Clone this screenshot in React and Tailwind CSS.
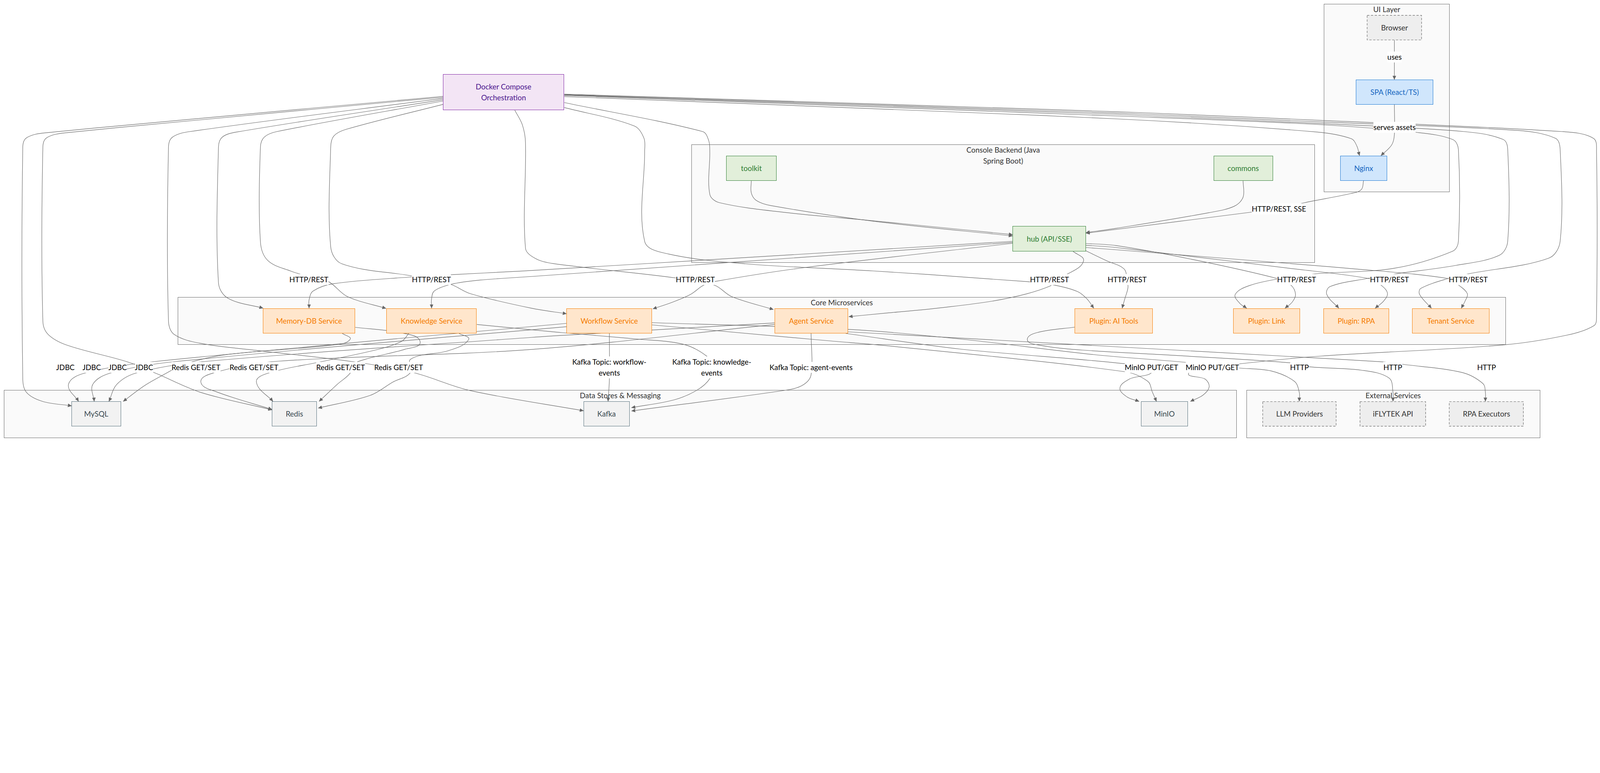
import React from "react";

const FONT = "[font-family:Lato,'Noto_Sans',sans-serif]";
const K = 4098 / 7172;

const V = {
  docker: "bg-[#f3e5f5] border border-solid border-[#7b1fa2] text-[#4a148c]",
  ui: "bg-[#d0e6fc] border border-solid border-[#1976d2] text-[#1565c0]",
  ext: "bg-[#eeeeee] text-[#333333]",
  green: "bg-[#e2efda] border border-solid border-[#2e7d32] text-[#2e7d32]",
  core: "bg-[#ffe6cc] border border-solid border-[#f57c00] text-[#f57c00]",
  data: "bg-[#f2f2f2] border border-solid border-[#546e7a] text-[#37474f]",
};

const groups = [
  { b: [5932, 17, 6494, 861], t: ["UI Layer"] },
  { b: [3098, 647, 5891, 1177], t: ["Console Backend (Java", "Spring Boot)"] },
  { b: [796, 1331, 6747, 1546], t: ["Core Microservices"] },
  { b: [17, 1748, 5541, 1963], t: ["Data Stores & Messaging"] },
  { b: [5584, 1748, 6900, 1963], t: ["External Services"] },
];

const nodes = [
  { b: [1984, 332, 2528, 494], t: ["Docker Compose", "Orchestration"], v: "docker" },
  { b: [6125, 68, 6371, 180], t: ["Browser"], v: "ext" },
  { b: [6075, 357, 6422, 469], t: ["SPA (React/TS)"], v: "ui" },
  { b: [6005, 698, 6214, 810], t: ["Nginx"], v: "ui" },
  { b: [3254, 698, 3479, 811], t: ["toolkit"], v: "green" },
  { b: [5437, 698, 5703, 811], t: ["commons"], v: "green" },
  { b: [4537, 1014, 4866, 1127], t: ["hub (API/SSE)"], v: "green" },
  { b: [1178, 1382, 1591, 1495], t: ["Memory-DB Service"], v: "core" },
  { b: [1731, 1382, 2136, 1495], t: ["Knowledge Service"], v: "core" },
  { b: [2538, 1382, 2921, 1495], t: ["Workflow Service"], v: "core" },
  { b: [3470, 1382, 3800, 1495], t: ["Agent Service"], v: "core" },
  { b: [4815, 1382, 5165, 1495], t: ["Plugin: AI Tools"], v: "core" },
  { b: [5525, 1382, 5825, 1495], t: ["Plugin: Link"], v: "core" },
  { b: [5929, 1382, 6224, 1495], t: ["Plugin: RPA"], v: "core" },
  { b: [6327, 1382, 6673, 1495], t: ["Tenant Service"], v: "core" },
  { b: [320, 1800, 542, 1912], t: ["MySQL"], v: "data" },
  { b: [1218, 1800, 1420, 1912], t: ["Redis"], v: "data" },
  { b: [2614, 1800, 2821, 1912], t: ["Kafka"], v: "data" },
  { b: [5112, 1800, 5322, 1912], t: ["MinIO"], v: "data" },
  { b: [5657, 1800, 5988, 1912], t: ["LLM Providers"], v: "ext" },
  { b: [6093, 1800, 6389, 1912], t: ["iFLYTEK API"], v: "ext" },
  { b: [6493, 1800, 6827, 1912], t: ["RPA Executors"], v: "ext" },
];

const labels = [
  [6248, 255, ["uses"]],
  [6248, 570, ["serves assets"]],
  [5730, 936, ["HTTP/REST, SSE"]],
  [1384, 1253, ["HTTP/REST"]],
  [1933, 1253, ["HTTP/REST"]],
  [3115, 1253, ["HTTP/REST"]],
  [4702, 1253, ["HTTP/REST"]],
  [5050, 1253, ["HTTP/REST"]],
  [5809, 1253, ["HTTP/REST"]],
  [6225, 1253, ["HTTP/REST"]],
  [6578, 1253, ["HTTP/REST"]],
  [293, 1647, ["JDBC"]],
  [411, 1647, ["JDBC"]],
  [527, 1647, ["JDBC"]],
  [645, 1647, ["JDBC"]],
  [878, 1647, ["Redis GET/SET"]],
  [1138, 1647, ["Redis GET/SET"]],
  [1526, 1647, ["Redis GET/SET"]],
  [1786, 1647, ["Redis GET/SET"]],
  [2730, 1646, ["Kafka Topic: workflow-", "events"]],
  [3189, 1646, ["Kafka Topic: knowledge-", "events"]],
  [3634, 1647, ["Kafka Topic: agent-events"]],
  [5159, 1647, ["MinIO PUT/GET"]],
  [5432, 1647, ["MinIO PUT/GET"]],
  [5822, 1647, ["HTTP"]],
  [6240, 1647, ["HTTP"]],
  [6660, 1647, ["HTTP"]],
];

const edges = [
  // UI layer
  [[6248, 180], [6248, 357]],
  [[6248, 469], [6248, 605], [6236, 650], [6188, 698]],
  [[6110, 810], [6100, 850], [6053, 868], [5845, 909], [5730, 936], [5609, 951], [4866, 1046]],
  // console
  [[5570, 811], [5570, 884], [5530, 925], [5416, 954], [5000, 1024], [4866, 1043]],
  [[3366, 811], [3366, 865], [3390, 900], [3454, 922], [3913, 992], [4537, 1058]],
  [[2528, 460], [3148, 590], [3175, 630], [3180, 680], [3180, 871], [3224, 909], [3530, 954], [3913, 990], [4537, 1052]],
  // docker left
  [[1984, 432], [200, 596], [118, 618], [101, 660], [101, 1700], [118, 1760], [190, 1800], [320, 1820]],
  [[1984, 436], [290, 596], [208, 618], [191, 660], [191, 1440], [215, 1500], [300, 1548], [568, 1622], [700, 1675], [900, 1760], [1218, 1838]],
  [[1984, 441], [850, 590], [772, 615], [754, 660], [754, 1440], [780, 1500], [900, 1540], [1173, 1574], [1582, 1622], [1856, 1672], [2100, 1750], [2614, 1842]],
  [[1984, 447], [1060, 592], [995, 615], [978, 660], [978, 1268], [1020, 1337], [1178, 1382]],
  [[1984, 453], [1240, 590], [1183, 615], [1166, 660], [1166, 1084], [1199, 1168], [1300, 1215], [1384, 1240], [1470, 1262], [1556, 1330], [1729, 1383]],
  [[1984, 468], [1550, 580], [1495, 610], [1481, 660], [1481, 1107], [1531, 1183], [1849, 1238], [2018, 1275], [2107, 1317], [2380, 1382], [2538, 1407]],
  // docker bottom
  [[2306, 494], [2340, 560], [2354, 640], [2354, 1113], [2400, 1160], [2478, 1182], [3033, 1247], [3201, 1279], [3278, 1330], [3465, 1388]],
  [[2528, 482], [2842, 565], [2885, 620], [2888, 680], [2888, 1082], [2995, 1139], [3339, 1183], [3913, 1215], [4602, 1263], [4727, 1279], [4827, 1307], [4870, 1340], [4901, 1382]],
  // docker right bundle
  [[2528, 433], [5000, 533], [5900, 592], [6055, 622], [6080, 655], [6092, 698]],
  [[2528, 428], [5000, 520], [5900, 558], [6350, 594], [6510, 626], [6535, 670], [6535, 1082], [6510, 1126], [6247, 1203], [5893, 1228], [5731, 1250], [5600, 1280], [5535, 1320], [5555, 1360], [5586, 1382]],
  [[2528, 426], [5000, 513], [5900, 553], [6560, 590], [6735, 625], [6756, 670], [6756, 1082], [6718, 1145], [6524, 1190], [6254, 1228], [6120, 1250], [5960, 1285], [5945, 1320], [5999, 1382]],
  [[2528, 424], [5000, 507], [5900, 546], [6800, 585], [6970, 620], [6991, 670], [6991, 1082], [6939, 1158], [6579, 1228], [6495, 1247], [6367, 1293], [6361, 1320], [6414, 1382]],
  [[2528, 422], [5000, 501], [5900, 539], [7000, 590], [7140, 620], [7154, 680], [7154, 1420], [7143, 1460], [7021, 1503], [6734, 1547], [5914, 1597], [5549, 1632], [5432, 1650], [5327, 1672], [5400, 1700], [5418, 1735], [5390, 1772], [5334, 1800]],
  // hub -> core
  [[4537, 1082], [2380, 1213], [2018, 1232], [1933, 1238], [1841, 1242], [1494, 1272], [1402, 1305], [1384, 1345], [1384, 1382]],
  [[4537, 1087], [2380, 1240], [2150, 1256], [2020, 1275], [1945, 1305], [1933, 1340], [1933, 1382]],
  [[4537, 1091], [3604, 1200], [3204, 1262], [3152, 1279], [3094, 1320], [3013, 1355], [2925, 1385]],
  [[4808, 1127], [4855, 1170], [4784, 1228], [4702, 1253], [4707, 1282], [4487, 1343], [4200, 1382], [3980, 1403], [3803, 1420]],
  [[4864, 1124], [4960, 1170], [5036, 1205], [5050, 1253], [5054, 1290], [5040, 1340], [5028, 1382]],
  [[4866, 1092], [5000, 1101], [5346, 1164], [5727, 1250], [5785, 1279], [5805, 1320], [5790, 1355], [5758, 1382]],
  [[4866, 1100], [5000, 1110], [5776, 1203], [6139, 1250], [6189, 1279], [6217, 1315], [6200, 1350], [6162, 1382]],
  [[4866, 1110], [5000, 1120], [6108, 1209], [6496, 1250], [6537, 1279], [6575, 1317], [6565, 1350], [6548, 1382]],
  // core -> MySQL
  [[2538, 1450], [685, 1622], [383, 1672], [306, 1723], [351, 1800]],
  [[2538, 1465], [779, 1622], [497, 1672], [415, 1723], [421, 1800]],
  [[3470, 1448], [2921, 1480], [2707, 1493], [2380, 1513], [905, 1622], [612, 1672], [523, 1723], [487, 1800]],
  [[1533, 1495], [1568, 1522], [1494, 1547], [1000, 1592], [800, 1640], [765, 1662], [650, 1727], [551, 1800]],
  // core -> Redis
  [[3470, 1455], [2380, 1567], [1215, 1622], [957, 1672], [899, 1713], [969, 1757], [1218, 1836]],
  [[1831, 1495], [1800, 1530], [1700, 1565], [1439, 1622], [1205, 1672], [1148, 1713], [1222, 1800]],
  [[1591, 1468], [1800, 1493], [1882, 1533], [1811, 1567], [1640, 1610], [1571, 1640], [1569, 1672], [1511, 1723], [1429, 1800]],
  [[2056, 1495], [2099, 1523], [2007, 1573], [1840, 1610], [1837, 1672], [1760, 1713], [1658, 1773], [1425, 1830]],
  // kafka
  [[2730, 1495], [2730, 1700], [2724, 1800]],
  [[2136, 1455], [2500, 1490], [2850, 1520], [3058, 1543], [3166, 1597], [3189, 1646], [3180, 1698], [3122, 1750], [3020, 1793], [2829, 1828]],
  [[3634, 1495], [3634, 1680], [3600, 1725], [3531, 1748], [2829, 1843]],
  // minio
  [[2921, 1457], [3700, 1527], [4000, 1553], [5041, 1667], [5143, 1710], [5163, 1757], [5182, 1800]],
  [[3789, 1495], [4300, 1565], [5029, 1630], [5159, 1658], [5060, 1700], [5018, 1740], [5050, 1780], [5104, 1800]],
  // external
  [[2921, 1447], [3800, 1477], [4300, 1520], [4900, 1590], [5316, 1625], [5549, 1650], [5694, 1663], [5800, 1710], [5822, 1760], [5822, 1800]],
  [[4815, 1467], [4652, 1490], [4603, 1522], [4652, 1547], [4851, 1570], [5250, 1593], [5781, 1627], [5870, 1645], [6100, 1660], [6224, 1695], [6242, 1760], [6242, 1800]],
  [[3800, 1488], [5000, 1555], [6202, 1623], [6280, 1633], [6550, 1670], [6645, 1720], [6656, 1760], [6656, 1800]],
];

function smooth(p) {
  const n = p.length;
  const norm = (a, b) => {
    const dx = b[0] - a[0];
    const dy = b[1] - a[1];
    const l = Math.hypot(dx, dy) || 1;
    return [dx / l, dy / l];
  };
  const t = p.map((_, i) =>
    i === 0 ? norm(p[0], p[1]) : i === n - 1 ? norm(p[n - 2], p[n - 1]) : norm(p[i - 1], p[i + 1])
  );
  let d = `M${p[0][0]} ${p[0][1]}`;
  for (let i = 0; i < n - 1; i++) {
    const L = Math.hypot(p[i + 1][0] - p[i][0], p[i + 1][1] - p[i][1]) / 3;
    d += ` C${p[i][0] + t[i][0] * L} ${p[i][1] + t[i][1] * L} ${p[i + 1][0] - t[i + 1][0] * L} ${p[i + 1][1] - t[i + 1][1] * L} ${p[i + 1][0]} ${p[i + 1][1]}`;
  }
  return d;
}

const box = (b) => ({ left: b[0] * K, top: b[1] * K, width: (b[2] - b[0]) * K, height: (b[3] - b[1]) * K });

function Group({ b, t }) {
  return (
    <div className="absolute bg-[#fafafa] border border-solid border-[#666666] flex flex-col items-center" style={box(b)}>
      <div className="text-[18.9px] leading-[28px] text-[#333333] text-center whitespace-nowrap mt-[-1px]">
        {t.map((l, i) => (
          <div key={i}>{l}</div>
        ))}
      </div>
    </div>
  );
}

function Node({ b, t, v }) {
  return (
    <div
      className={`absolute flex flex-col items-center justify-center text-center text-[18.9px] leading-[28px] whitespace-nowrap ${V[v]}`}
      style={box(b)}
    >
      {t.map((l, i) => (
        <div key={i}>{l}</div>
      ))}
    </div>
  );
}

function Label({ x, y, t }) {
  return (
    <div
      className="absolute -translate-x-1/2 -translate-y-1/2 bg-white text-black text-[18.9px] leading-[28px] text-center whitespace-nowrap"
      style={{ left: x * K, top: y * K }}
    >
      {t.map((l, i) => (
        <div key={i}>{l}</div>
      ))}
    </div>
  );
}

export default function App() {
  const dashed = nodes.filter((n) => n.v === "ext");
  return (
    <div className={`relative w-[4098px] h-[1131px] bg-white overflow-hidden ${FONT}`}>
      {groups.map((g, i) => (
        <Group key={i} {...g} />
      ))}
      <svg className="absolute left-0 top-0" width="4098" height="1131" viewBox="0 0 7172 1980">
        <defs>
          <marker id="arr" viewBox="0 0 18 16" refX="17" refY="8" markerWidth="18" markerHeight="16" markerUnits="userSpaceOnUse" orient="auto">
            <path d="M0 0 L18 8 L0 16 Z" fill="#666666" />
          </marker>
        </defs>
        {edges.map((e, i) => (
          <path key={i} d={smooth(e)} fill="none" stroke="#666666" strokeWidth="2" markerEnd="url(#arr)" />
        ))}
      </svg>
      {labels.map(([x, y, t], i) => (
        <Label key={i} x={x} y={y} t={t} />
      ))}
      {nodes.map((n, i) => (
        <Node key={i} {...n} />
      ))}
      <svg className="absolute left-0 top-0 pointer-events-none" width="4098" height="1131" viewBox="0 0 7172 1980">
        {dashed.map((n, i) => (
          <rect
            key={i}
            x={n.b[0] + 1}
            y={n.b[1] + 1}
            width={n.b[2] - n.b[0] - 2}
            height={n.b[3] - n.b[1] - 2}
            fill="none"
            stroke="#666666"
            strokeWidth="2"
            strokeDasharray="10 7"
          />
        ))}
      </svg>
    </div>
  );
}
